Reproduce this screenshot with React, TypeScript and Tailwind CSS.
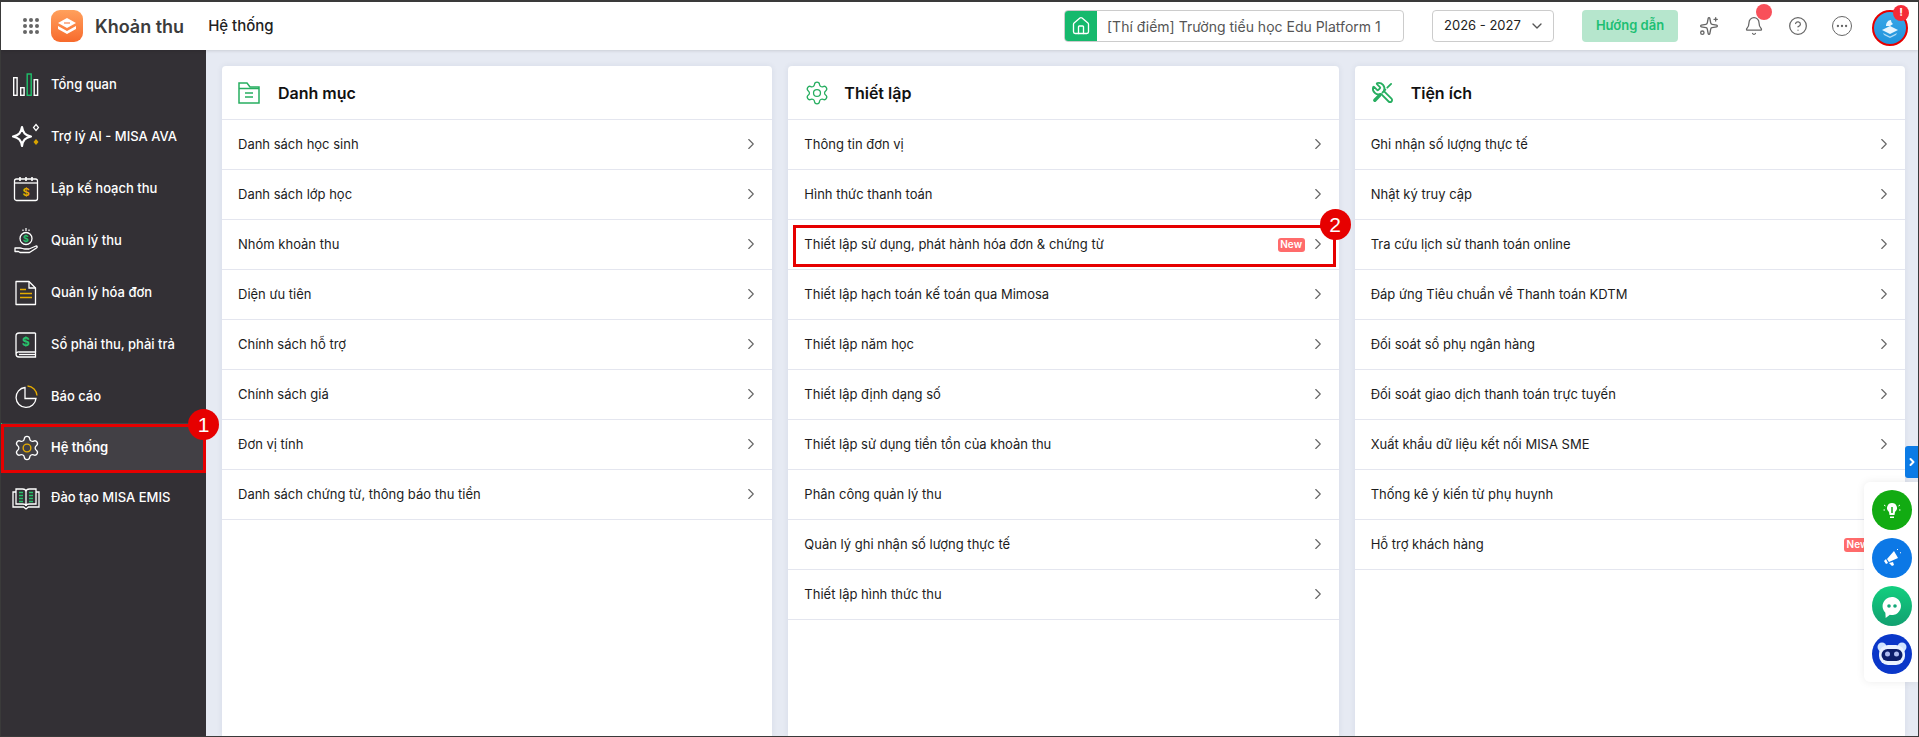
import {
  ChevronDown,
  ChevronRight,
  CircleHelp,
  Ellipsis,
  Bell,
  House,
  Sparkles,
} from "lucide-react";
import type { ReactNode } from "react";

const GEAR =
  "M9.671 4.136a2.34 2.34 0 0 1 4.659 0 2.34 2.34 0 0 0 3.319 1.915 2.34 2.34 0 0 1 2.33 4.033 2.34 2.34 0 0 0 0 3.831 2.34 2.34 0 0 1-2.33 4.033 2.34 2.34 0 0 0-3.319 1.915 2.34 2.34 0 0 1-4.659 0 2.34 2.34 0 0 0-3.32-1.915 2.34 2.34 0 0 1-2.33-4.033 2.34 2.34 0 0 0 0-3.831A2.34 2.34 0 0 1 6.35 6.051a2.34 2.34 0 0 0 3.319-1.915";

const Bars = () => (
  <svg width="28" height="24" viewBox="0 0 28 24" fill="none" strokeWidth="1.4">
    <rect x="1.7" y="4.7" width="3.4" height="17.6" stroke="#fff" />
    <rect x="8.7" y="14.7" width="3.4" height="7.6" stroke="#fff" />
    <rect x="15.2" y="1" width="4" height="21.3" stroke="#1fc16b" />
    <rect x="22.2" y="6.7" width="3.4" height="15.6" stroke="#fff" />
  </svg>
);

const Ai = () => (
  <svg width="32" height="28" viewBox="0 0 32 28" fill="none">
    <path d="M12 4c1 6 3 8 9 9.500-6 1.500-8 3.500-9 9.500-1-6-3-8-9-9.500 6-1.500 8-3.500 9-9.500z" stroke="#fff" strokeWidth="2.200" strokeLinejoin="round" />
    <path d="M26 1.500l2.500 3-2.500 3-2.500-3z" stroke="#fff" strokeWidth="1.200" />
    <path d="M26 16l2.500 3-2.500 3-2.500-3z" fill="#d9a400" />
  </svg>
);

const Calendar = () => (
  <svg width="26" height="26" viewBox="0 0 26 26" fill="none">
    <rect x="1.500" y="3" width="23" height="21.500" rx="2" stroke="#fff" strokeWidth="1.300" />
    <path d="M1.500 7h23" stroke="#fff" strokeWidth="1.300" />
    <path d="M7 1v4M13 1v4M19 1v4" stroke="#fff" strokeWidth="1.600" />
    <text x="13" y="20" textAnchor="middle" fontSize="11" fontWeight="700" fill="#e5ac00">$</text>
  </svg>
);

const HandCoin = () => (
  <svg width="26" height="28" viewBox="0 0 26 28" fill="none">
    <circle cx="13" cy="11.500" r="6" stroke="#fff" strokeWidth="1.300" />
    <text x="13" y="15" textAnchor="middle" fontSize="9" fontWeight="700" fill="#27c26c">$</text>
    <path d="M13 1v3M10 2.500v1.500M16 2.500v1.500" stroke="#fff" strokeWidth="1.200" />
    <path d="M2 21h5c2 0 3 1 5 1h4l7-3c1.500 0 1.500 1.500.5 2l-7 4.500H7l-1.500-1H2z" stroke="#fff" strokeWidth="1.300" strokeLinejoin="round" />
  </svg>
);

const Invoice = () => (
  <svg width="22" height="26" viewBox="0 0 22 26" fill="none">
    <path d="M1 1.500h13l6.500 6.500v16.500H1z" stroke="#fff" strokeWidth="1.300" strokeLinejoin="round" />
    <path d="M14 1.500V8h6.500" stroke="#fff" strokeWidth="1.300" />
    <path d="M5 9.500h6M5 13.500h12M5 17.500h12" stroke="#e5ac00" strokeWidth="1.500" />
  </svg>
);

const Ledger = () => (
  <svg width="22" height="26" viewBox="0 0 22 26" fill="none">
    <path d="M20.500 1H4a3 3 0 0 0-3 3v18a3 3 0 0 0 3 3h16.500v-5H4a2.500 2.500 0 0 0-3 2.500" stroke="#fff" strokeWidth="1.300" />
    <path d="M20.500 1v19" stroke="#fff" strokeWidth="1.300" />
    <path d="M4 22.500h16" stroke="#fff" strokeWidth="1.300" />
    <text x="11" y="14" textAnchor="middle" fontSize="12" fontWeight="700" fill="#27c26c">$</text>
  </svg>
);

const Pie = () => (
  <svg width="24" height="24" viewBox="0 0 24 24" fill="none" strokeWidth="1.300">
    <path d="M11 2.500a10 10 0 1 0 11 11H11z" stroke="#fff" />
    <path d="M13.500 1a10 10 0 0 1 9.500 9.500" stroke="#e5ac00" />
  </svg>
);

const GearYellow = () => (
  <svg width="28" height="28" viewBox="0 0 24 24" fill="none">
    <path d={GEAR} stroke="#fff" strokeWidth="1.100" />
    <circle cx="12" cy="12" r="3.300" stroke="#e5ac00" strokeWidth="1.200" />
  </svg>
);

const OpenBook = () => (
  <svg width="28" height="24" viewBox="0 0 28 24" fill="none">
    <path d="M4 3h6.500c2 0 3.500 1 3.500 3v14c0-1.500-1.500-2-3.500-2H4zM24 3h-6.500c-2 0-3.500 1-3.500 3v14c0-1.500 1.500-2 3.500-2H24z" stroke="#fff" strokeWidth="1.300" />
    <path d="M4 6H1v15h10.500l2.500 2 2.500-2H27V6h-3" stroke="#fff" strokeWidth="1.300" />
    <path d="M7 6.500h4M7 9.500h4M7 12.500h4M7 15.500h4M17 6.500h4M17 9.500h4M17 12.500h4M17 15.500h4" stroke="#27c26c" strokeWidth="1.400" />
  </svg>
);

const FolderIcon = () => (
  <svg width="22" height="22" viewBox="0 0 22 22" fill="none" stroke="#27ae60" strokeWidth="1.500">
    <path d="M1 21V1h8l3 4h9v16z" />
    <path d="M1 6.500h20" />
    <path d="M7 11h8M7 15h8" />
  </svg>
);

const GearIcon = () => (
  <svg width="26" height="26" viewBox="0 0 24 24" fill="none" stroke="#27ae60" strokeWidth="1.200">
    <path d={GEAR} />
    <circle cx="12" cy="12" r="3.200" />
  </svg>
);

const ToolsIcon = () => (
  <svg width="23" height="23" viewBox="0 0 24 24" fill="none" stroke="#27ae60" strokeWidth="1.900" strokeLinecap="round" strokeLinejoin="round">
    <path
      transform="translate(24 0) scale(-1 1)"
      d="M14.700 6.300a1 1 0 0 0 0 1.400l1.600 1.600a1 1 0 0 0 1.400 0l3.106-3.105c.32-.322.863-.22.983.218a6 6 0 0 1-8.259 7.057l-7.910 7.910a1 1 0 0 1-2.999-3l7.910-7.910a6 6 0 0 1 7.057-8.259c.438.120.540.662.219.984z"
    />
    <path d="M21 3l-4 4M15 9l-3 3" />
    <path d="M9 15l-5 5" strokeWidth="3.600" />
  </svg>
);

type NavItem = { label: string; icon: ReactNode; h: string };

const navItems: NavItem[] = [
  { label: "Tổng quan", icon: <Bars />, h: "h-[52px]" },
  { label: "Trợ lý AI - MISA AVA", icon: <Ai />, h: "h-[52px]" },
  { label: "Lập kế hoạch thu", icon: <Calendar />, h: "h-[52px]" },
  { label: "Quản lý thu", icon: <HandCoin />, h: "h-[52px]" },
  { label: "Quản lý hóa đơn", icon: <Invoice />, h: "h-[52px]" },
  { label: "Sổ phải thu, phải trả", icon: <Ledger />, h: "h-[52px]" },
  { label: "Báo cáo", icon: <Pie />, h: "h-[52px]" },
];

const danhMuc = [
  "Danh sách học sinh",
  "Danh sách lớp học",
  "Nhóm khoản thu",
  "Diện ưu tiên",
  "Chính sách hỗ trợ",
  "Chính sách giá",
  "Đơn vị tính",
  "Danh sách chứng từ, thông báo thu tiền",
];

const thietLap = [
  "Thông tin đơn vị",
  "Hình thức thanh toán",
  "Thiết lập sử dụng, phát hành hóa đơn & chứng từ",
  "Thiết lập hạch toán kế toán qua Mimosa",
  "Thiết lập năm học",
  "Thiết lập định dạng số",
  "Thiết lập sử dụng tiền tồn của khoản thu",
  "Phân công quản lý thu",
  "Quản lý ghi nhận số lượng thực tế",
  "Thiết lập hình thức thu",
];

const tienIch = [
  "Ghi nhận số lượng thực tế",
  "Nhật ký truy cập",
  "Tra cứu lịch sử thanh toán online",
  "Đáp ứng Tiêu chuẩn về Thanh toán KDTM",
  "Đối soát sổ phụ ngân hàng",
  "Đối soát giao dịch thanh toán trực tuyến",
  "Xuất khẩu dữ liệu kết nối MISA SME",
  "Thống kê ý kiến từ phụ huynh",
  "Hỗ trợ khách hàng",
];

const NewBadge = () => (
  <span className="flex h-[14px] w-[27px] items-center justify-center rounded-[3px] bg-[#ff6b6b] text-[10px] font-semibold text-white">
    New
  </span>
);

const StepBadge = ({ n, className }: { n: number; className: string }) => (
  <span
    className={`absolute z-10 flex h-[31px] w-[31px] items-center justify-center rounded-full bg-[#e60000] text-[21px] font-medium text-white font-['Liberation_Sans',sans-serif] ${className}`}
  >
    {n}
  </span>
);

const Row = ({ label, badge, boxed }: { label: string; badge?: boolean; boxed?: boolean }) => (
  <div className="relative flex h-[50px] items-center border-b border-[#e4e6ef] pl-4 pr-[12px] text-[13px] text-[#1c1c1c]">
    <span className="flex-1">{label}</span>
    {badge && <NewBadge />}
    <ChevronRight className="mb-[2px] ml-[4px] h-[18px] w-[18px] text-[#666]" strokeWidth={1.5} />
    {boxed && (
      <>
        <span className="absolute left-[5px] right-[3px] top-[5px] bottom-[2px] border-[3px] border-[#e60000]" />
        <StepBadge n={2} className="right-[-12px] top-[-11px]" />
      </>
    )}
  </div>
);

const Card = ({ title, icon, children }: { title: string; icon: ReactNode; children: ReactNode }) => (
  <section className="rounded-t-[4px] bg-white shadow-[0_0_6px_rgba(40,50,90,0.08)]">
    <header className="flex h-[54px] items-center border-b border-[#e4e6ef] pl-4">
      <span className="flex w-10 items-center">{icon}</span>
      <h2 className="text-[16px] font-semibold text-[#111]">{title}</h2>
    </header>
    {children}
  </section>
);

export default function App() {
  return (
    <div className="relative flex h-[737px] w-[1919px] flex-col overflow-hidden border-x border-t-2 border-b border-[#3a3a3a] bg-[#e6eaf3] font-['Inter',sans-serif]">
      {/* top bar */}
      <header className="z-10 flex h-[48px] shrink-0 items-center bg-white pl-[22px] pr-[10px] shadow-[0_1px_3px_rgba(0,0,0,0.12)]">
        <div className="grid w-4 grid-cols-3 gap-[2px]">
          {Array.from({ length: 9 }).map((_, i) => (
            <span key={i} className="h-[4px] w-[4px] rounded-full bg-[#666]" />
          ))}
        </div>
        <div className="ml-[12px] flex h-8 w-8 items-center justify-center rounded-[9px] bg-gradient-to-b from-[#ffa05c] to-[#f76a2c]">
          <svg width="20" height="18" viewBox="0 0 20 18" fill="#fff">
            <path d="M10 1l9 5-9 5-9-5z" />
            <path d="M1 9l9 5 9-5v3l-9 5-9-5z" />
            <path d="M7 6h6" stroke="#f76a2c" strokeWidth="1" />
          </svg>
        </div>
        <span className="ml-3 text-[18px] font-semibold text-[#3c3c3c]">Khoản thu</span>
        <span className="ml-6 text-[15px] font-medium text-[#222]">Hệ thống</span>

        <div className="ml-auto flex h-8 w-[340px] overflow-hidden rounded-[4px] border border-[#ccc]">
          <span className="flex w-8 items-center justify-center bg-[#16b96d]">
            <House className="h-5 w-5 text-white" strokeWidth={1.6} />
          </span>
          <span className="flex flex-1 items-center pl-[10px] text-[14px] text-[#555]">
            [Thí điểm] Trường tiểu học Edu Platform 1
          </span>
        </div>
        <div className="ml-[28px] flex h-8 w-[122px] items-center justify-between rounded-[4px] border border-[#ccc] pl-[11px] pr-[8px] text-[13px] text-[#222]">
          2026 - 2027
          <ChevronDown className="h-4 w-4 text-[#555]" />
        </div>
        <button className="ml-[28px] h-8 w-[96px] rounded-[4px] bg-[#b6e6cd] text-[13px] font-semibold text-[#1dbf73]">
          Hướng dẫn
        </button>
        <Sparkles className="ml-[21px] h-5 w-5 text-[#666]" strokeWidth={1.6} />
        <div className="relative ml-[25px]">
          <Bell className="h-5 w-5 text-[#666]" strokeWidth={1.5} />
          <span className="absolute right-[-8px] top-[-12px] h-4 w-4 rounded-full bg-[#f8505a]" />
        </div>
        <CircleHelp className="ml-[24px] h-5 w-5 text-[#666]" strokeWidth={1.5} />
        <Ellipsis className="ml-[24px] h-5 w-5 rounded-full border-[1.5px] border-[#666] p-[2px] text-[#666]" />
        <div className="relative ml-[20px] mt-[3px] flex h-[36px] w-[36px] items-center justify-center rounded-full border-2 border-[#e60000] bg-gradient-to-b from-[#3aa8e8] to-[#1f93dc]">
          <svg width="20" height="20" viewBox="0 0 20 20" fill="#e8f6ff">
            <path d="M10 8l8 4-8 4-8-4z" />
            <path d="M3 15l7 3.500 7-3.500-1 2-6 3-6-3z" opacity="0.7" />
            <path d="M6 8c0-3 2-6 5-6 0 2 1 3 2 4l-3 2z" />
          </svg>
          <span className="absolute right-[-3px] top-[-7px] flex h-4 w-4 items-center justify-center rounded-full bg-[#f52b37] text-[11px] font-bold text-white">
            !
          </span>
        </div>
      </header>

      <div className="flex min-h-0 flex-1">
        {/* sidebar */}
        <aside className="w-[205px] shrink-0 bg-[#333035] pt-[9px] text-[13px] font-medium text-white">
          {navItems.map((item) => (
            <div key={item.label} className={`flex items-center ${item.h}`}>
              <span className="flex w-[50px] shrink-0 justify-center">{item.icon}</span>
              {item.label}
            </div>
          ))}
          <div className="relative flex h-[50px] items-center border-l border-[#1fc16b] bg-[#424045] font-semibold">
            <span className="flex w-[49px] shrink-0 justify-center"><GearYellow /></span>
            Hệ thống
            <span className="absolute left-[-1px] right-0 top-[1px] bottom-0 border-[3px] border-[#e60000]" />
            <StepBadge n={1} className="right-[-13px] top-[-14px]" />
          </div>
          <div className="flex h-[50px] items-center">
            <span className="flex w-[50px] shrink-0 justify-center"><OpenBook /></span>
            Đào tạo MISA EMIS
          </div>
        </aside>

        {/* cards */}
        <main className="grid min-w-0 flex-1 grid-cols-3 gap-4 pl-4 pr-[13px] pt-4">
          <Card title="Danh mục" icon={<FolderIcon />}>
            {danhMuc.map((r) => (
              <Row key={r} label={r} />
            ))}
          </Card>
          <Card title="Thiết lập" icon={<GearIcon />}>
            {thietLap.map((r, i) => (
              <Row key={r} label={r} badge={i === 2} boxed={i === 2} />
            ))}
          </Card>
          <Card title="Tiện ích" icon={<ToolsIcon />}>
            {tienIch.map((r, i) => (
              <Row key={r} label={r} badge={i === 8} />
            ))}
          </Card>
        </main>
      </div>

      {/* floating helpers */}
      <span className="absolute right-0 top-[444px] z-20 flex h-8 w-[13px] items-center justify-center rounded-l-[3px] bg-[#0b7be6]">
        <ChevronRight className="h-3 w-3 text-white" strokeWidth={4} />
      </span>
      <div className="absolute right-0 top-[480px] z-20 flex h-[200px] w-[54px] flex-col gap-2 rounded-l-[6px] bg-white py-2 pl-2 shadow-[0_0_8px_rgba(0,0,0,0.08)]">
        <span className="flex h-10 w-10 items-center justify-center rounded-full bg-[#12ab12]">
          <svg width="22" height="22" viewBox="0 0 22 22" fill="#fff">
            <path d="M11 4a5 5 0 0 0-3 9l.500 3h5l.500-3a5 5 0 0 0-3-9z" />
            <path d="M9 17.500h4v1.500H9z" />
            <path d="M11 8v6" stroke="#12ab12" strokeWidth="1.500" />
            <path d="M3 6l1.500 1M19 6l-1.500 1M2.500 11h1.500M18 11h1.500" stroke="#fff" strokeWidth="1" />
          </svg>
        </span>
        <span className="flex h-10 w-10 items-center justify-center rounded-full bg-[#0c78e6]">
          <svg width="22" height="22" viewBox="0 0 22 22" fill="#fff">
            <path d="M13 4l4 7-9 4-2-3z" />
            <path d="M5 12l2 4-2 1-2-3z" />
            <path d="M8 16l4-1 1 3-2 1z" />
            <path d="M16 3l1-1M19 6l1-.500" stroke="#fff" strokeWidth="1" />
          </svg>
        </span>
        <span className="flex h-10 w-10 items-center justify-center rounded-full bg-gradient-to-b from-[#12cf7f] to-[#12a070]">
          <svg width="26" height="26" viewBox="0 0 26 26">
            <path d="M13 4a9 9 0 1 1-5 16.500L3 22l1.500-5A9 9 0 0 1 13 4z" fill="#fff" transform="rotate(-20 13 13)" />
            <circle cx="10" cy="13" r="1.800" fill="#12a878" />
            <circle cx="16" cy="13" r="1.800" fill="#12a878" />
          </svg>
        </span>
        <span className="flex h-10 w-10 items-center justify-center rounded-full bg-[#0a37c9]">
          <svg width="32" height="30" viewBox="0 0 32 30">
            <circle cx="6" cy="8" r="4.500" fill="#cfe4ff" />
            <circle cx="26" cy="8" r="4.500" fill="#cfe4ff" />
            <rect x="3" y="6" width="26" height="20" rx="9" fill="#e9f2ff" />
            <rect x="5.500" y="10" width="21" height="12" rx="6" fill="#0c1f6b" />
            <circle cx="11.500" cy="15" r="2.500" fill="#aebdf0" />
            <circle cx="20.500" cy="15" r="2.500" fill="#aebdf0" />
          </svg>
        </span>
      </div>
    </div>
  );
}
